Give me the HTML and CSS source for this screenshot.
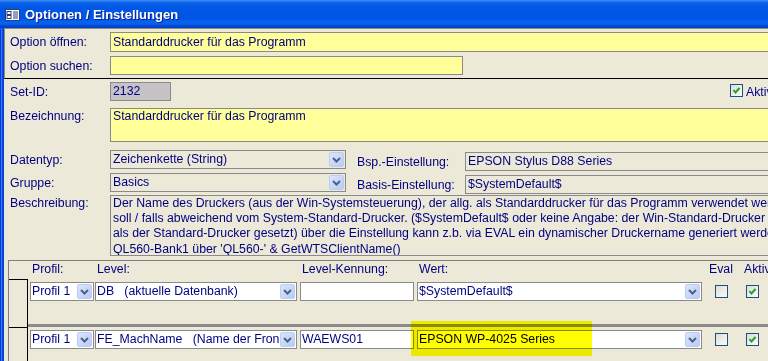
FILE: index.html
```html
<!DOCTYPE html>
<html lang="de">
<head>
    <meta charset="UTF-8">
    <title>Optionen / Einstellungen</title>
    <link rel="stylesheet" href="styles.css">
</head>
<body>
<div class="window">
    <div class="titlebar">
        <svg class="app-icon" width="15" height="12" viewBox="0 0 15 12">
            <rect x="0.5" y="0.5" width="14" height="11" fill="#fff" stroke="#2a3f7a"/>
            <rect x="2" y="2.5" width="4" height="3" fill="none" stroke="#2a3f7a"/>
            <rect x="2" y="6.5" width="4" height="3" fill="none" stroke="#2a3f7a"/>
            <path d="M8 3h5M8 5h5M8 7h5M8 9h5" stroke="#2a3f7a"/>
        </svg>
        <span class="title">Optionen / Einstellungen</span>
    </div>
    <div class="frame">
        <div class="frame-left"></div>
        <div class="client">
            <div class="form-header">
                <div class="row r20">
                    <span class="lbl">Option öffnen:</span>
                    <div class="field yellow wide">Standarddrucker für das Programm</div>
                </div>
                <div class="row">
                    <span class="lbl">Option suchen:</span>
                    <div class="field yellow search"></div>
                </div>
            </div>

            <div class="detail">
                <div class="row">
                    <span class="lbl">Set-ID:</span>
                    <div class="field locked">2132</div>
                    <span class="check checked top-check"><svg width="11" height="11" viewBox="0 0 11 11"><path d="M2.5 5 L4.5 7.5 L8.5 3" fill="none" stroke="#21a121" stroke-width="2"/></svg></span>
                    <span class="aktiv-top">Aktiv</span>
                </div>
                <div class="row top bez">
                    <span class="lbl">Bezeichnung:</span>
                    <div class="field yellow wide tall">Standarddrucker für das Programm</div>
                </div>
                <div class="row split datentyp">
                    <span class="lbl">Datentyp:</span>
                    <div class="field combo mid">
                        <span class="val">Zeichenkette (String)</span>
                        <span class="drop"><svg width="13" height="13" viewBox="0 0 13 13"><path d="M3 5 L6.5 8.5 L10 5" fill="none" stroke="#4d6185" stroke-width="2"/></svg></span>
                    </div>
                    <div class="side">
                        <span class="side-lbl">Bsp.-Einstellung:</span>
                        <div class="field wide">EPSON Stylus D88 Series</div>
                    </div>
                </div>
                <div class="row split gruppe">
                    <span class="lbl">Gruppe:</span>
                    <div class="field combo mid">
                        <span class="val">Basics</span>
                        <span class="drop"><svg width="13" height="13" viewBox="0 0 13 13"><path d="M3 5 L6.5 8.5 L10 5" fill="none" stroke="#4d6185" stroke-width="2"/></svg></span>
                    </div>
                    <div class="side">
                        <span class="side-lbl">Basis-Einstellung:</span>
                        <div class="field wide">$SystemDefault$</div>
                    </div>
                </div>
                <div class="row top besch">
                    <span class="lbl">Beschreibung:</span>
                    <div class="field wide memo">Der Name des Druckers (aus der Win-Systemsteuerung), der allg. als Standarddrucker für das Programm verwendet werden<br>soll / falls abweichend vom System-Standard-Drucker. ($SystemDefault$ oder keine Angabe: der Win-Standard-Drucker wird<br>als der Standard-Drucker gesetzt) über die Einstellung kann z.b. via EVAL ein dynamischer Druckername generiert werden<br>QL560-Bank1 über 'QL560-' &amp; GetWTSClientName()</div>
                </div>
            </div>

            <div class="subform">
                <div class="sub-head">
                    <span class="sel-space"></span>
                    <span class="h-profil">Profil:</span>
                    <span class="h-level">Level:</span>
                    <span class="h-kenn">Level-Kennung:</span>
                    <span class="h-wert">Wert:</span>
                    <span class="h-eval">Eval</span>
                    <span class="h-aktiv">Aktiv</span>
                </div>

                <div class="sub-row">
                    <span class="selector"></span>
                    <div class="cells">
                        <div class="field combo white c-profil"><span class="val">Profil 1</span><span class="drop"><svg width="13" height="13" viewBox="0 0 13 13"><path d="M3 5 L6.5 8.5 L10 5" fill="none" stroke="#4d6185" stroke-width="2"/></svg></span></div>
                        <div class="field combo white c-level"><span class="val">DB   (aktuelle Datenbank)</span><span class="drop"><svg width="13" height="13" viewBox="0 0 13 13"><path d="M3 5 L6.5 8.5 L10 5" fill="none" stroke="#4d6185" stroke-width="2"/></svg></span></div>
                        <div class="field white c-kenn"></div>
                        <div class="c-wert">
                            <div class="field combo white"><span class="val">$SystemDefault$</span><span class="drop"><svg width="13" height="13" viewBox="0 0 13 13"><path d="M3 5 L6.5 8.5 L10 5" fill="none" stroke="#4d6185" stroke-width="2"/></svg></span></div>
                        </div>
                        <span class="check c-eval"></span>
                        <span class="check checked c-aktiv"><svg width="11" height="11" viewBox="0 0 11 11"><path d="M2.5 5 L4.5 7.5 L8.5 3" fill="none" stroke="#21a121" stroke-width="2"/></svg></span>
                    </div>
                </div>

                <div class="sub-row">
                    <span class="selector"></span>
                    <div class="cells">
                        <div class="field combo white c-profil"><span class="val">Profil 1</span><span class="drop"><svg width="13" height="13" viewBox="0 0 13 13"><path d="M3 5 L6.5 8.5 L10 5" fill="none" stroke="#4d6185" stroke-width="2"/></svg></span></div>
                        <div class="field combo white c-level"><span class="val">FE_MachName   (Name der Fron</span><span class="drop"><svg width="13" height="13" viewBox="0 0 13 13"><path d="M3 5 L6.5 8.5 L10 5" fill="none" stroke="#4d6185" stroke-width="2"/></svg></span></div>
                        <div class="field white c-kenn">WAEWS01</div>
                        <div class="c-wert">
                            <div class="field combo white"><span class="val">EPSON WP-4025 Series</span><span class="drop"><svg width="13" height="13" viewBox="0 0 13 13"><path d="M3 5 L6.5 8.5 L10 5" fill="none" stroke="#4d6185" stroke-width="2"/></svg></span></div>
                            <div class="marker"></div>
                        </div>
                        <span class="check c-eval"></span>
                        <span class="check checked c-aktiv"><svg width="11" height="11" viewBox="0 0 11 11"><path d="M2.5 5 L4.5 7.5 L8.5 3" fill="none" stroke="#21a121" stroke-width="2"/></svg></span>
                    </div>
                </div>
            </div>
        </div>
    </div>
</div>
</body>
</html>
```

FILE: styles.css
```css
html, body {
    margin: 0;
    padding: 0;
    height: 100%;
    overflow: hidden;
    background-color: #ece9d8;
    font-family: 'Liberation Sans', Arial, sans-serif;
    font-size: 12.3px;
    color: #000080;
}
.window {
    width: 820px;
    height: 100%;
    display: flex;
    flex-direction: column;
}
.titlebar {
    height: 28px;
    flex: none;
    display: flex;
    align-items: center;
    padding-left: 5px;
    background: linear-gradient(#3d8ff8 0, #0a5fe8 3px, #0058e6 7px, #0054e3 18px, #0862ee 22px, #0a5fe8 24px, #0046d4 26px, #003cbf 28px);
}
.app-icon {
    margin-right: 5px;
    margin-top: 1px;
}
.title {
    color: #fff;
    font-weight: bold;
    font-size: 13px;
    text-shadow: 1px 1px 0 #0a1f8f;
}
.frame {
    flex: 1;
    display: flex;
}
.frame-left {
    width: 4px;
    flex: none;
    background: linear-gradient(to right, #0a3bd0 0, #0a3bd0 1px, #2a7bf8 1px, #2a7bf8 2px, #0b55e0 2px, #0831d9 4px);
}
.client {
    flex: 1;
    display: flex;
    flex-direction: column;
}
.row {
    display: flex;
    align-items: center;
    height: 19px;
}
.row.r20 {
    height: 20px;
}
.row.top {
    align-items: flex-start;
}
.lbl {
    width: 100px;
    flex: none;
    white-space: nowrap;
}
.row.top .lbl {
    line-height: 15px;
    padding-top: 1px;
}
.field {
    box-sizing: border-box;
    height: 19px;
    border: 1px solid #8a8a8a;
    padding: 0 2px;
    line-height: 17px;
    white-space: nowrap;
    overflow: hidden;
    flex: none;
}
.r20 .field {
    height: 20px;
    line-height: 18px;
}
.yellow {
    background-color: #ffff99;
}
.white {
    background-color: #fff;
}
.wide {
    width: 700px;
}
.search {
    width: 353px;
}
.locked {
    width: 61px;
    background-color: #c6c3c6;
}
.tall {
    height: 34px;
    line-height: 15px;
}
.memo {
    height: 61px;
    line-height: 15.2px;
}

/* header / detail sections */
.form-header {
    border-top: 1px solid #8e8c80;
    border-left: 1px solid #8e8c80;
    border-bottom: 1px solid #000;
    padding: 3px 0 3px 5px;
    display: flex;
    flex-direction: column;
    gap: 4px;
}
.detail {
    padding: 3px 0 0 6px;
    display: flex;
    flex-direction: column;
}
.bez {
    margin-top: 7px;
    height: 34px;
}
.datentyp {
    margin-top: 8px;
}
.gruppe {
    margin-top: 4px;
}
.besch {
    margin-top: 3px;
    height: 61px;
}
.top-check {
    align-self: flex-start;
    margin: 2px 0 0 559px;
}
.aktiv-top {
    margin-left: 3px;
}

/* combo boxes */
.combo {
    display: flex;
    padding: 0 1px 0 2px;
}
.combo .val {
    flex: 1;
    overflow: hidden;
    white-space: pre;
}
.drop {
    flex: none;
    box-sizing: border-box;
    width: 15px;
    height: 15px;
    margin-top: 1px;
    border: 1px solid #b9cdf6;
    border-radius: 2px;
    background: linear-gradient(135deg, #dbe6fd, #b8cbf6);
    display: flex;
    align-items: center;
    justify-content: center;
}
.mid {
    width: 236px;
}
.side {
    display: flex;
    align-items: center;
    align-self: flex-start;
    margin: 2px 0 0 11px;
    height: 19px;
}
.side-lbl {
    width: 108px;
    flex: none;
    white-space: nowrap;
}

/* checkboxes */
.check {
    box-sizing: border-box;
    width: 13px;
    height: 13px;
    flex: none;
    border: 1px solid #1c5180;
    background: linear-gradient(135deg, #dcdcd7, #fbfbf9);
    display: flex;
    align-items: center;
    justify-content: center;
}

/* subform */
.subform {
    flex: 1;
    margin: 4px 0 0 4px;
    border-top: 1px solid #808080;
    border-left: 1px solid #808080;
}
.sub-head {
    display: flex;
    height: 18px;
    line-height: 16px;
    white-space: nowrap;
}
.sel-space {
    width: 19px;
    flex: none;
}
.sub-head span {
    flex: none;
}
.h-profil {
    margin-left: 2px;
    width: 62px;
    padding-left: 2px;
}
.h-level {
    margin-left: 1px;
    width: 200px;
    padding-left: 2px;
}
.h-kenn {
    margin-left: 3px;
    width: 112px;
    padding-left: 2px;
}
.h-wert {
    margin-left: 3px;
    width: 283px;
    padding-left: 2px;
}
.h-eval {
    margin-left: 7px;
    width: 35px;
}
.sub-row {
    display: flex;
    height: 48px;
}
.selector {
    width: 18px;
    flex: none;
    border-top: 1px solid #000;
    border-right: 1px solid #000;
}
.cells {
    flex: 1;
    display: flex;
    align-items: flex-start;
    box-sizing: border-box;
    padding-top: 3px;
    border-bottom: 3px solid #8a8a8a;
}
.cells .field {
    padding-left: 1px;
}
.c-profil {
    margin-left: 2px;
    width: 64px;
}
.c-level {
    margin-left: 1px;
    width: 202px;
}
.c-kenn {
    margin-left: 3px;
    width: 114px;
}
.c-wert {
    margin-left: 3px;
    width: 285px;
    flex: none;
    position: relative;
}
.c-wert .field {
    width: 285px;
}
.c-eval {
    margin: 3px 0 0 13px;
}
.c-aktiv {
    margin: 3px 0 0 18px;
}
.marker {
    position: absolute;
    left: -6px;
    top: -9px;
    width: 181px;
    height: 35px;
    background-color: #ffff00;
    mix-blend-mode: multiply;
}
```
